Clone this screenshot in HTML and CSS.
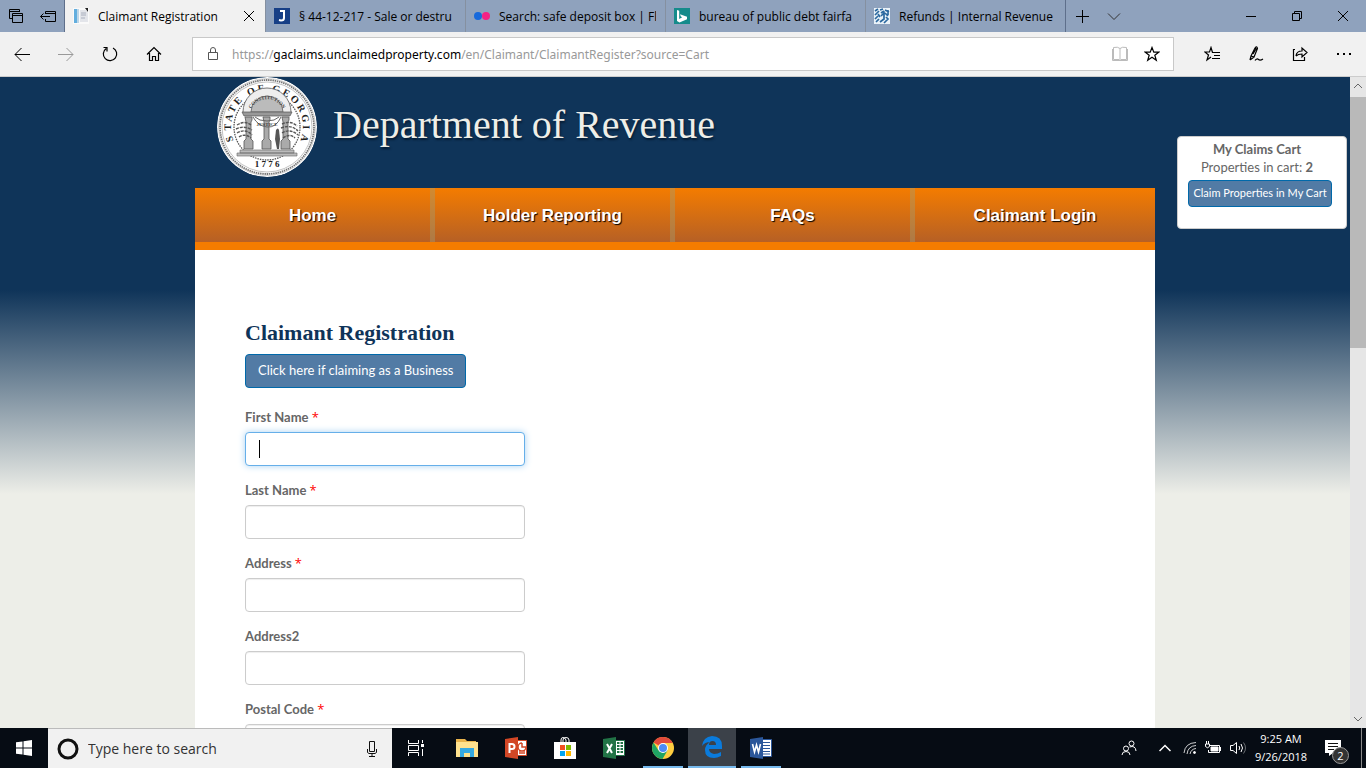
FILE: index.html
```html
<!DOCTYPE html>
<html lang="en">
<head>
<meta charset="utf-8">
<title>Claimant Registration</title>
<link rel="stylesheet" href="styles.css">
</head>
<body>
<header class="tabstrip">
  <div class="tab-tools">
    <button class="icon-btn" aria-label="Set aside tabs list"><svg width="16" height="16" viewBox="0 0 16 16" class="line"><path d="M4.5 10.500H1.500V1.500H11.500V4"/><path d="M1.500 3.500H11"/><path d="M4.500 5.500H14.500V14.500H4.500zM4.500 7.500H14.500"/></svg></button>
    <button class="icon-btn" aria-label="Set these tabs aside"><svg width="16" height="16" viewBox="0 0 16 16" class="line"><path d="M5.500 6V3.500H15.500V13.500H5.500V11M5.500 5.500H15.500M.5 8.500H10M3.500 5.500L.5 8.500L3.500 11.500"/></svg></button>
  </div>
  <div class="tab active">
    <svg width="16" height="16" viewBox="0 0 16 16"><path fill="#fafafa" d="M0 0H16V16H0z"/><path fill="#62aede" d="M1 1h3v14H1z"/><path fill="#bcd6e8" d="M4 1h2v14H4z"/><path d="M7 2h6l2 3v9H7z" fill="#e3e5ea"/><path d="M8 5h5M8 7h5M8 10h4" stroke="#aab0be"/><path d="M12 0h3v4z" fill="#222"/></svg>
    <span class="tab-title">Claimant Registration</span>
    <button class="icon-btn close" aria-label="Close tab"><svg width="12" height="12" viewBox="0 0 12 12" class="line"><path d="M1 1L11 11M11 1L1 11"/></svg></button>
  </div>
  <div class="tab"><svg width="16" height="16" viewBox="0 0 16 16"><path fill="#173f86" d="M0 0H16V16H0z"/><path d="M6 3H10V10Q10 12.500 7 12.500L5 12" fill="none" stroke="#fff" stroke-width="2"/></svg><span class="tab-title">§ 44-12-217 - Sale or destru</span></div>
  <div class="tab"><svg width="16" height="16" viewBox="0 0 16 16"><circle cx="4" cy="8" r="4" fill="#1769dc"/><circle cx="12" cy="8" r="4" fill="#f52284"/></svg><span class="tab-title">Search: safe deposit box | Fl</span></div>
  <div class="tab"><svg width="16" height="16" viewBox="0 0 16 16"><path fill="#158b8b" d="M0 0H16V16H0z"/><path fill="#fff" d="M3 2l2.200.8V11l3-1.700L6.800 8.600 6 6.300l7 2.400v2.600L5.500 14.500 3 13z"/></svg><span class="tab-title">bureau of public debt fairfa</span></div>
  <div class="tab"><svg width="16" height="16" viewBox="0 0 16 16"><path fill="#eaf2f8" d="M0 0H16V16H0z"/><path d="M1 3l3-2M1 7l4-4M1 11l3-3M2 14l3-3M6 2l3-1M7 5l3-2M11 2l4 2M11 5l3 3M7 8l3-3v6l-4 3M12 9l2 2-4 4M14 2v5M4 6l2 3" stroke="#2b689f" stroke-width="1.700" fill="none"/></svg><span class="tab-title">Refunds | Internal Revenue S</span></div>
  <div class="new-tab">
    <button class="icon-btn" aria-label="New tab"><svg width="14" height="14" viewBox="0 0 14 14" class="line"><path d="M7.500 1V14M1 7.500H14"/></svg></button>
    <button class="icon-btn" aria-label="Show tab previews"><svg width="14" height="14" viewBox="0 0 14 14" class="line thin"><path d="M1 4.500L7 10.500L13 4.500"/></svg></button>
  </div>
  <div class="window-controls">
    <button class="icon-btn" aria-label="Minimize"><svg width="10" height="10" viewBox="0 0 10 10" class="line"><path d="M0 5.500H10"/></svg></button>
    <button class="icon-btn" aria-label="Restore"><svg width="10" height="10" viewBox="0 0 10 10" class="line"><path d="M.5 2.500H7.500V9.500H.5zM2.500 2V.5H9.500V7.500H8"/></svg></button>
    <button class="icon-btn" aria-label="Close"><svg width="10" height="10" viewBox="0 0 10 10" class="line"><path d="M0 0L10 10M10 0L0 10"/></svg></button>
  </div>
</header>

<nav class="toolbar" aria-label="Browser">
  <div class="nav-buttons">
    <button class="icon-btn" aria-label="Back"><svg width="16" height="16" viewBox="0 0 16 16" class="line"><path d="M16 8.500H1M7.500 2L1 8.500L7.500 15"/></svg></button>
    <button class="icon-btn dim" aria-label="Forward"><svg width="16" height="16" viewBox="0 0 16 16" class="line"><path d="M0 8.500H15M8.500 2L15 8.500L8.500 15"/></svg></button>
    <button class="icon-btn" aria-label="Refresh"><svg width="16" height="16" viewBox="0 0 16 16" class="line"><path d="M11 2A6.700 6.700 0 1 1 4.200 2.500M1.500 1.500H5V5.500" stroke-width="1.200"/></svg></button>
    <button class="icon-btn" aria-label="Home"><svg width="16" height="16" viewBox="0 0 16 16" class="line"><path d="M1 8.500L8 1.500L15 8.500M3.500 7V14.500H6.500V10.500H9.500V14.500H12.500V7" stroke-width="1.200"/></svg></button>
  </div>
  <div class="address">
    <svg width="12" height="16" viewBox="0 0 12 16" class="line lock"><path d="M1.500 6.500H10.500V13.500H1.500zM3.500 6.500V4Q3.500 1.500 6 1.500T8.500 4V6.500"/></svg>
    <a class="url" href="#">https://<b>gaclaims.unclaimedproperty.com</b>/en/Claimant/ClaimantRegister?source=Cart</a>
    <button class="icon-btn pale" aria-label="Reading view"><svg width="16" height="16" viewBox="0 0 16 16" class="line"><path d="M8 2.500Q6 .5 1.500 1.500V13.500H7L8 14.500L9 13.500H14.500V1.500Q10 .5 8 2.500V14M.5 3V14.500H15.500V3"/></svg></button>
    <button class="icon-btn" aria-label="Add to favorites"><svg width="16" height="16" viewBox="0 0 16 16" class="line"><path d="M8 1.500L9.800 6.200H14.700L10.800 9.200L12.300 14.300L8 11.300L3.700 14.300L5.200 9.200L1.300 6.200H6.200z" stroke-width="1.200"/></svg></button>
  </div>
  <div class="hub-buttons">
    <button class="icon-btn" aria-label="Favorites"><svg width="16" height="16" viewBox="0 0 16 16" class="line"><path d="M8.500 6.500L7 1.500L5.500 6H.8L4.500 9L3 14L7 11M8 6.500H16M10 9.500H16M8 12.500H16" stroke-width="1.200"/></svg></button>
    <button class="icon-btn" aria-label="Web notes"><svg width="16" height="16" viewBox="0 0 16 16" class="line"><path d="M2 14L3 10L7 2Q9-.5 9.500 2.500L6 11L2 14M7 2L9 3.500M3 10L6 11M5 8L8 3M7 14.500Q9 12 10.500 13.500T15 13" stroke-width="1.200"/></svg></button>
    <button class="icon-btn" aria-label="Share"><svg width="16" height="16" viewBox="0 0 16 16" class="line"><path d="M3 3.500H1.500V14.500H12.500V11M4 10Q4.500 5 10 5V2L15 6.500L10 11V8Q6 8 4 10" stroke-width="1.200"/></svg></button>
    <button class="icon-btn" aria-label="More"><svg width="16" height="16" viewBox="0 0 16 16"><path d="M1 7h2v2H1zM7 7h2v2H7zM13 7h2v2h-2z"/></svg></button>
  </div>
</nav>

<div class="viewport">
  <main class="page">
    <div class="site">
      <header class="banner">
        <svg class="seal" width="100" height="100" viewBox="0 0 100 100" role="img" aria-label="State of Georgia seal">
          <defs><path id="ring" d="M16 62A36 36 0 1 1 84 62"/><path id="arch" d="M32.500 36A18 18 0 0 1 67.500 36"/></defs>
          <circle cx="50" cy="50" r="50" fill="#fff"/>
          <circle cx="50" cy="50" r="47" fill="none" stroke="#777" stroke-width="1.800" stroke-dasharray="1.500 .7"/>
          <circle cx="50" cy="50" r="48.500" fill="none" stroke="#aaa" stroke-width=".5"/>
          <circle cx="50" cy="50" r="33" fill="none" stroke="#555" stroke-width="1.300" stroke-dasharray="1.500 1"/>
          <circle cx="50" cy="50" r="45" fill="none" stroke="#999" stroke-width=".6"/>
          <text class="seal-text"><textPath href="#ring" startOffset="50%" text-anchor="middle">S&nbsp; T A T E&nbsp;&nbsp; O F&nbsp;&nbsp; G E O R G I&nbsp; A</textPath></text>
          <text class="seal-year" x="50" y="90" text-anchor="middle">1 7 7 6</text>
          <path d="M26 35A24 24 0 0 1 74 35" fill="#eee" stroke="#777"/>
          <path d="M34 35A16 16 0 0 1 66 35z" fill="#bbb" stroke="#777"/>
          <text class="seal-small"><textPath href="#arch" startOffset="50%" text-anchor="middle">CONSTITUTION</textPath></text>
          <path d="M25 35H75L73 39H27z" fill="#999" stroke="#555" stroke-width=".7"/>
          <path d="M28 40h7v3l-1 2v17l2 2v8h-9v-8l2-2V45zM46 40h7v3l-1 2v17l2 2v8h-9v-8l2-2V45zM65 40h7v3l-1 2v17l2 2v8h-9v-8l2-2V45z" fill="#aaa" stroke="#555" stroke-width=".8"/>
          <path d="M36 40Q41 49 50 50T64 40M38 40Q42 44 50 44T62 40" fill="none" stroke="#666"/>
          <text class="seal-small" x="50" y="49" text-anchor="middle">JUSTICE</text>
          <path d="M20 48Q28 43 34 48M19 52Q27 48 35 53M20 56Q29 51 35 58M22 60Q28 56 34 61M65 47Q74 43 80 49M64 51Q74 47 81 54M65 56Q73 51 81 58M66 61Q73 56 78 61" fill="none" stroke="#555" stroke-width="1.400" stroke-dasharray="3 1"/>
          <path d="M59 53q2-3 3 0l1 9-1 10h-2l-2-10z" fill="#555"/>
          <path d="M23 73H77V76H23zM20 76H80V79H20z" fill="#bbb" stroke="#666" stroke-width=".6"/>
        </svg>
        <h1 class="dept">Department of Revenue</h1>
      </header>
      <nav class="menu" aria-label="Main">
        <a href="#">Home</a><a href="#">Holder Reporting</a><a href="#">FAQs</a><a href="#">Claimant Login</a>
      </nav>
      <section class="content">
        <h2 class="heading">Claimant Registration</h2>
        <button class="btn" type="button">Click here if claiming as a Business</button>
        <form class="form">
          <div class="field"><label for="first">First Name <span class="req">*</span></label><input id="first" class="focused" type="text"></div>
          <div class="field"><label for="last">Last Name <span class="req">*</span></label><input id="last" type="text"></div>
          <div class="field"><label for="addr">Address <span class="req">*</span></label><input id="addr" type="text"></div>
          <div class="field"><label for="addr2">Address2</label><input id="addr2" type="text"></div>
          <div class="field"><label for="zip">Postal Code <span class="req">*</span></label><input id="zip" type="text"></div>
        </form>
      </section>
    </div>
    <aside class="cart">
      <strong>My Claims Cart</strong>
      <span>Properties in cart: <b>2</b></span>
      <button class="btn small" type="button">Claim Properties in My Cart</button>
    </aside>
  </main>
  <div class="scrollbar">
    <button class="icon-btn" aria-label="Scroll up"><svg width="8" height="8" viewBox="0 0 8 8" class="line"><path d="M0 6L4 2L8 6"/></svg></button>
    <div class="track"><div class="thumb"></div></div>
    <button class="icon-btn" aria-label="Scroll down"><svg width="8" height="8" viewBox="0 0 8 8" class="line"><path d="M0 2L4 6L8 2"/></svg></button>
  </div>
</div>

<footer class="taskbar">
  <button class="task" aria-label="Start"><svg width="16" height="16" viewBox="0 0 16 16" fill="#fff"><path d="M0 2.300L6.500 1.400V7.500H0zM7.500 1.200L16 0V7.500H7.500zM0 8.500H6.500V14.600L0 13.700zM7.500 8.500H16V16L7.500 14.800z"/></svg></button>
  <div class="search">
    <svg width="22" height="22" viewBox="0 0 22 22"><circle cx="11" cy="11" r="9" fill="none" stroke="#111" stroke-width="3"/></svg>
    <input type="text" aria-label="Search" placeholder="Type here to search">
    <svg width="12" height="18" viewBox="0 0 12 18" class="line"><path d="M3.500 1.500H8.500V11.500H3.500zM1.500 9V12.500L3 13.500H9L10.500 12.500V9M6 13.500V16.500M3 16.500H9"/></svg>
  </div>
  <button class="task" aria-label="Task view"><svg width="18" height="16" viewBox="0 0 18 16" class="line white"><path d="M1.500 0V3.500H11.500V0M1.500 16V12.500H11.500V16M1.500 5.500H11.500V10.500H1.500zM15.500 0V3M15.500 9V16"/><path d="M14 4h3v3h-3z" fill="#fff" stroke="none"/></svg></button>
  <div class="apps">
    <button class="task" aria-label="File Explorer"><svg width="22" height="20" viewBox="0 0 22 20"><path fill="#e9b44c" d="M0 1h9l2 2h9v4H0z"/><path fill="#ffe28e" d="M0 4h22v15H0z"/><path fill="#35a9e1" d="M4 10h14v9h-4v-4H8v4H4z"/></svg></button>
    <button class="task" aria-label="PowerPoint"><svg width="23" height="22" viewBox="0 0 23 22"><path fill="#fff" stroke="#d24726" d="M12 3.500H21.500V18.500H12z"/><path d="M17 6v4h4A4 4 0 1 1 17 6M14 14h6M14 16h6" fill="none" stroke="#d24726" stroke-width="1.500"/><path fill="#d24726" d="M0 2L13 0V22L0 20z"/><path d="M4.500 16V7H7Q9.500 7 9.500 9.500T7 12H5" fill="none" stroke="#fff" stroke-width="2"/></svg></button>
    <button class="task" aria-label="Store"><svg width="24" height="24" viewBox="0 0 24 24"><path d="M8 6V4Q8 1.500 10 1.500T13 4V6M10 6V4Q10 1.500 13 1.500T16 4V6" fill="none" stroke="#fff"/><path fill="#fff" d="M1 6H23V23H1z"/><path fill="#f25022" d="M7 9h5v5H7z"/><path fill="#7fba00" d="M13 9h5v5h-5z"/><path fill="#00a4ef" d="M7 15h5v5H7z"/><path fill="#ffb900" d="M13 15h5v5h-5z"/></svg></button>
    <button class="task" aria-label="Excel"><svg width="23" height="22" viewBox="0 0 23 22"><path fill="#fff" stroke="#217346" d="M12 3.500H21.500V18.500H12z"/><path d="M14 6h6M14 9h6M14 12h6M14 15h6" stroke="#217346" stroke-width="2" stroke-dasharray="2.500 1"/><path fill="#217346" d="M0 2L13 0V22L0 20z"/><path d="M4 7L9 16M9 7L4 16" stroke="#fff" stroke-width="2"/></svg></button>
    <button class="task open" aria-label="Chrome"><svg width="22" height="22" viewBox="0 0 22 22"><circle cx="11" cy="11" r="11" fill="#ffcd40"/><path fill="#e24a3b" d="M11 11L1.500 5.500A11 11 0 0 1 20.800 6H11z"/><path fill="#1fa463" d="M1.500 5.500A11 11 0 0 0 10.500 22L15.500 13.500 11 11 6.500 13.500z"/><circle cx="11" cy="11" r="5" fill="#fff"/><circle cx="11" cy="11" r="4" fill="#4c8bf5"/></svg></button>
    <button class="task current" aria-label="Edge"><svg width="20" height="22" viewBox="0 0 20 22"><path fill="#0a7bdc" d="M0 10Q1 1 10 0Q20 0 20 10V13H7Q7 17 12 18Q16 18 19 16V20Q15 22 12 22Q3 22 3 14Q3 9 8 6Q3 6 0 10M7 9H14Q14 5 10.500 5T7 9"/></svg></button>
    <button class="task open" aria-label="Word"><svg width="23" height="22" viewBox="0 0 23 22"><path fill="#fff" stroke="#2b579a" d="M12 2.500H21.500V19.500H12z"/><path d="M13 5.500h7M13 8.500h7M13 11.500h7M13 14.500h7M13 17h7" stroke="#2b579a"/><path fill="#2b579a" d="M0 2L13 0V22L0 20z"/><path d="M2.500 7L4.500 15L6.500 8L8.500 15L10.500 7" fill="none" stroke="#fff" stroke-width="1.600"/></svg></button>
  </div>
  <div class="tray">
    <svg class="people line white" width="16" height="16" viewBox="0 0 16 16"><circle cx="10.500" cy="3.500" r="2.500"/><circle cx="5" cy="8.500" r="2.500"/><path d="M1 15Q1 11.500 5 11.500T9 15M8.500 7Q14.500 5 15 11"/></svg>
    <svg class="line white" width="12" height="8" viewBox="0 0 12 8"><path d="M.5 7L6 1.500L11.500 7" stroke-width="1.500"/></svg>
    <svg class="wifi line white" width="14" height="14" viewBox="0 0 14 14"><path d="M1 12Q2 2 13 1.500M4 13Q5 5 13 4.500M7 13Q8 8 13 7.500" opacity=".8"/><circle cx="11.500" cy="11.500" r="1" fill="#fff"/></svg>
    <svg class="line white" width="17" height="14" viewBox="0 0 17 14"><path d="M5 4.500H14.500V11.500H3.500V9M15.500 6V10M.5 3V5.500Q2.500 8 4.500 5.500V3zM1.500 3V0M3.500 3V0"/><path d="M6 6h7v4H6z" fill="#fff"/></svg>
    <svg class="line white" width="17" height="14" viewBox="0 0 17 14"><path d="M.5 4.500H3L6.500 1.500V12.500L3 9.500H.5zM9 5Q10.500 7 9 9M11 3Q14 7 11 11"/><path d="M13.500 1.500Q17.500 7 13.500 12.500" opacity=".4"/></svg>
    <div class="clock"><span>9:25 AM</span><span>9/26/2018</span></div>
    <button class="notice" aria-label="Notifications"><svg width="16" height="16" viewBox="0 0 16 16"><path fill="#fff" d="M0 0H16V13H8L4 16V13H0z"/><path d="M3 3.500H13M3 6.500H13M3 9.500H9" stroke="#111"/></svg><span class="badge">2</span></button>
  </div>
</footer>
</body>
</html>
```
FILE: styles.css
```css
* { box-sizing: border-box; }

body {
  margin: 0;
  height: 100vh;
  display: flex;
  flex-direction: column;
  overflow: hidden;
  font-family: "Open Sans", sans-serif;
  font-size: 12px;
  color: #000;
}

button { font-family: inherit; }

.icon-btn {
  display: flex;
  align-items: center;
  justify-content: center;
  padding: 0;
  border: 0;
  background: none;
  color: #000;
}

svg { flex: none; }
.line { fill: none; stroke: currentColor; }
.thin { stroke: #333; }
.white { stroke: #fff; }

/* Tab strip */
.tabstrip {
  display: flex;
  flex: none;
  height: 32px;
  background: #8fa2bd;
}

.tab-tools {
  display: flex;
  flex: none;
  width: 65px;
  border-right: 1px solid #5e6f8b;
}
.tab-tools .icon-btn { flex: 1; }

.tab {
  display: flex;
  align-items: center;
  gap: 9px;
  flex: 0 1 200px;
  min-width: 0;
  padding: 0 9px 0 8px;
  border-left: 1px solid #8590a0;
}
.tab.active { background: #f1f1f1; border-left: 0; }

.tab-title {
  flex: 1;
  min-width: 0;
  overflow: hidden;
  white-space: nowrap;
}
.close { width: 14px; }

.new-tab { display: flex; flex: none; border-left: 1px solid #5e6f8b; }
.new-tab .icon-btn { width: 32px; }

.window-controls { display: flex; margin-left: auto; }
.window-controls .icon-btn { width: 46px; }

/* Address bar */
.toolbar {
  display: flex;
  align-items: center;
  flex: none;
  height: 45px;
  background: #f1f1f1;
  border-bottom: 1px solid #ccc;
}

.nav-buttons { display: flex; width: 192px; flex: none; }
.nav-buttons .icon-btn { width: 44px; }
.dim { color: #999; }

.address {
  display: flex;
  align-items: center;
  flex: 1;
  min-width: 0;
  height: 34px;
  padding: 0 5px 0 14px;
  background: #fff;
  border: 1px solid #c8c8c8;
}
.address .icon-btn { width: 32px; }
.lock { color: #555; }
.pale { color: #bbb; }

.url {
  flex: 1;
  min-width: 0;
  margin-left: 13px;
  overflow: hidden;
  white-space: nowrap;
  font-family: "Noto Sans", sans-serif;
  color: #999;
  text-decoration: none;
}
.url b { font-weight: 400; color: #000; }

.hub-buttons { display: flex; flex: none; padding-left: 16px; }
.hub-buttons .icon-btn { width: 44px; }

/* Page area */
.viewport { display: flex; flex: 1; min-height: 0; }

.page {
  position: relative;
  flex: 1;
  min-width: 0;
  overflow: hidden;
  background: #edeee8 linear-gradient(#0f3459 213px, #edeee8 417px);
}

.site { max-width: 960px; margin: 0 auto; }

.banner {
  display: flex;
  align-items: flex-start;
  gap: 16px;
  height: 111px;
  padding-left: 22px;
}

.seal { border-radius: 50%; }
.seal-text { font: 700 10px "Liberation Serif", serif; fill: #222; }
.seal-year { font: 700 9px "Liberation Serif", serif; fill: #222; }
.seal-small { font: 700 5px "Liberation Serif", serif; fill: #444; }

.dept {
  margin: 0;
  font: 400 40px/96px "Liberation Serif", serif;
  color: #eeeee8;
  text-shadow: 1px 2px 2px #061c33;
}

.menu {
  display: flex;
  border-bottom: 8px solid #f47c00;
  background: linear-gradient(#f47c00, #b66025);
}
.menu a {
  width: 25%;
  padding-top: 1px;
  border-right: 5px solid rgba(160, 160, 120, 0.4);
  font: 700 17px/53px "Liberation Sans", sans-serif;
  text-align: center;
  text-decoration: none;
  color: #fff;
  text-shadow: 1px 1px 1px #000;
}
.menu a:last-child { border-right: 0; }

.content {
  min-height: 700px;
  padding: 70px 50px;
  background: #fff;
  font-family: Lato, sans-serif;
}

.heading {
  margin: 0 0 8px;
  font: 700 22px/26px "Liberation Serif", serif;
  color: #0f3459;
}

.btn {
  height: 34px;
  padding: 0 12px 2px;
  border: 1px solid #0069aa;
  border-radius: 4px;
  background: #527ba5;
  color: #fff;
  font: 400 13px/20px Lato, sans-serif;
}
.btn.small {
  height: 27px;
  margin: 4px 0 0 6px;
  padding: 0 4px 2px;
  font-size: 11px;
}

.form {
  display: flex;
  flex-direction: column;
  gap: 15px;
  max-width: 280px;
  margin-top: 20px;
}

.field { display: flex; flex-direction: column; gap: 6px; }
.field label { font-size: 13px; line-height: 18px; font-weight: 700; color: #666; }
.field input {
  height: 34px;
  padding: 6px 12px;
  border: 1px solid #ccc;
  border-radius: 4px;
  background-color: #fff;
  font: 14px Lato, sans-serif;
  box-shadow: inset 0 1px 1px #eee;
}
.field .focused {
  border-color: #66afe9;
  background: #fff linear-gradient(#000, #000) 13px center / 1px 18px no-repeat;
  box-shadow: 0 0 7px #a9d2f3;
}
.req { color: #f00; font-family: "Open Sans", sans-serif; font-weight: 400; line-height: 1; }

.cart {
  position: absolute;
  top: 59px;
  right: 3px;
  display: flex;
  flex-direction: column;
  align-items: center;
  width: 170px;
  height: 93px;
  padding: 3px 10px 0 0;
  border: 1px solid #ccc;
  border-radius: 4px;
  background: #fff;
  color: #666;
  font: 13px/18px Lato, sans-serif;
}

.scrollbar {
  display: flex;
  flex-direction: column;
  width: 16px;
  background: #e6e6e6;
}
.scrollbar .icon-btn { height: 18px; color: #666; }
.track { flex: 1; padding-top: 2px; }
.thumb { height: 41%; background: #b9b9b9; }

/* Taskbar */
.taskbar {
  display: flex;
  flex: none;
  height: 40px;
  background: #060c14;
  color: #fff;
}

.task {
  display: flex;
  align-items: center;
  justify-content: center;
  width: 48px;
  height: 40px;
  padding: 0;
  border: 0;
  background: none;
}
.open {
  background: linear-gradient(#76b9ed, #76b9ed) center bottom / 40px 2px no-repeat;
}
.current { background: #3b4149; border-bottom: 2px solid #76b9ed; }

.search {
  display: flex;
  align-items: center;
  gap: 9px;
  width: 344px;
  padding: 0 14px 0 9px;
  background: #f1f1f1;
  border-top: 1px solid #bbb;
  color: #111;
}
.search input {
  flex: 1;
  min-width: 0;
  padding: 0;
  border: 0;
  background: none;
  font: 14px "Open Sans", sans-serif;
}
.search input::placeholder { color: #333; opacity: 1; }

.apps { display: flex; gap: 1px; margin-left: 3px; }

.tray {
  display: flex;
  align-items: center;
  gap: 8px;
  margin-left: auto;
  margin-right: 4px;
  padding-right: 12px;
  border-right: 1px solid #888;
}
.people { margin-right: 14px; }
.wifi { margin-left: 4px; }

.clock {
  display: flex;
  flex-direction: column;
  align-items: center;
  width: 52px;
  font-size: 11px;
  line-height: 18px;
}

.notice {
  position: relative;
  display: flex;
  width: 24px;
  margin-left: 10px;
  padding: 0;
  border: 0;
  background: none;
}
.badge {
  position: absolute;
  left: 7px;
  top: 7px;
  width: 17px;
  height: 17px;
  border: 1px solid #999;
  border-radius: 50%;
  background: #333;
  color: #fff;
  font-size: 11px;
  line-height: 15px;
  text-align: center;
}
```
